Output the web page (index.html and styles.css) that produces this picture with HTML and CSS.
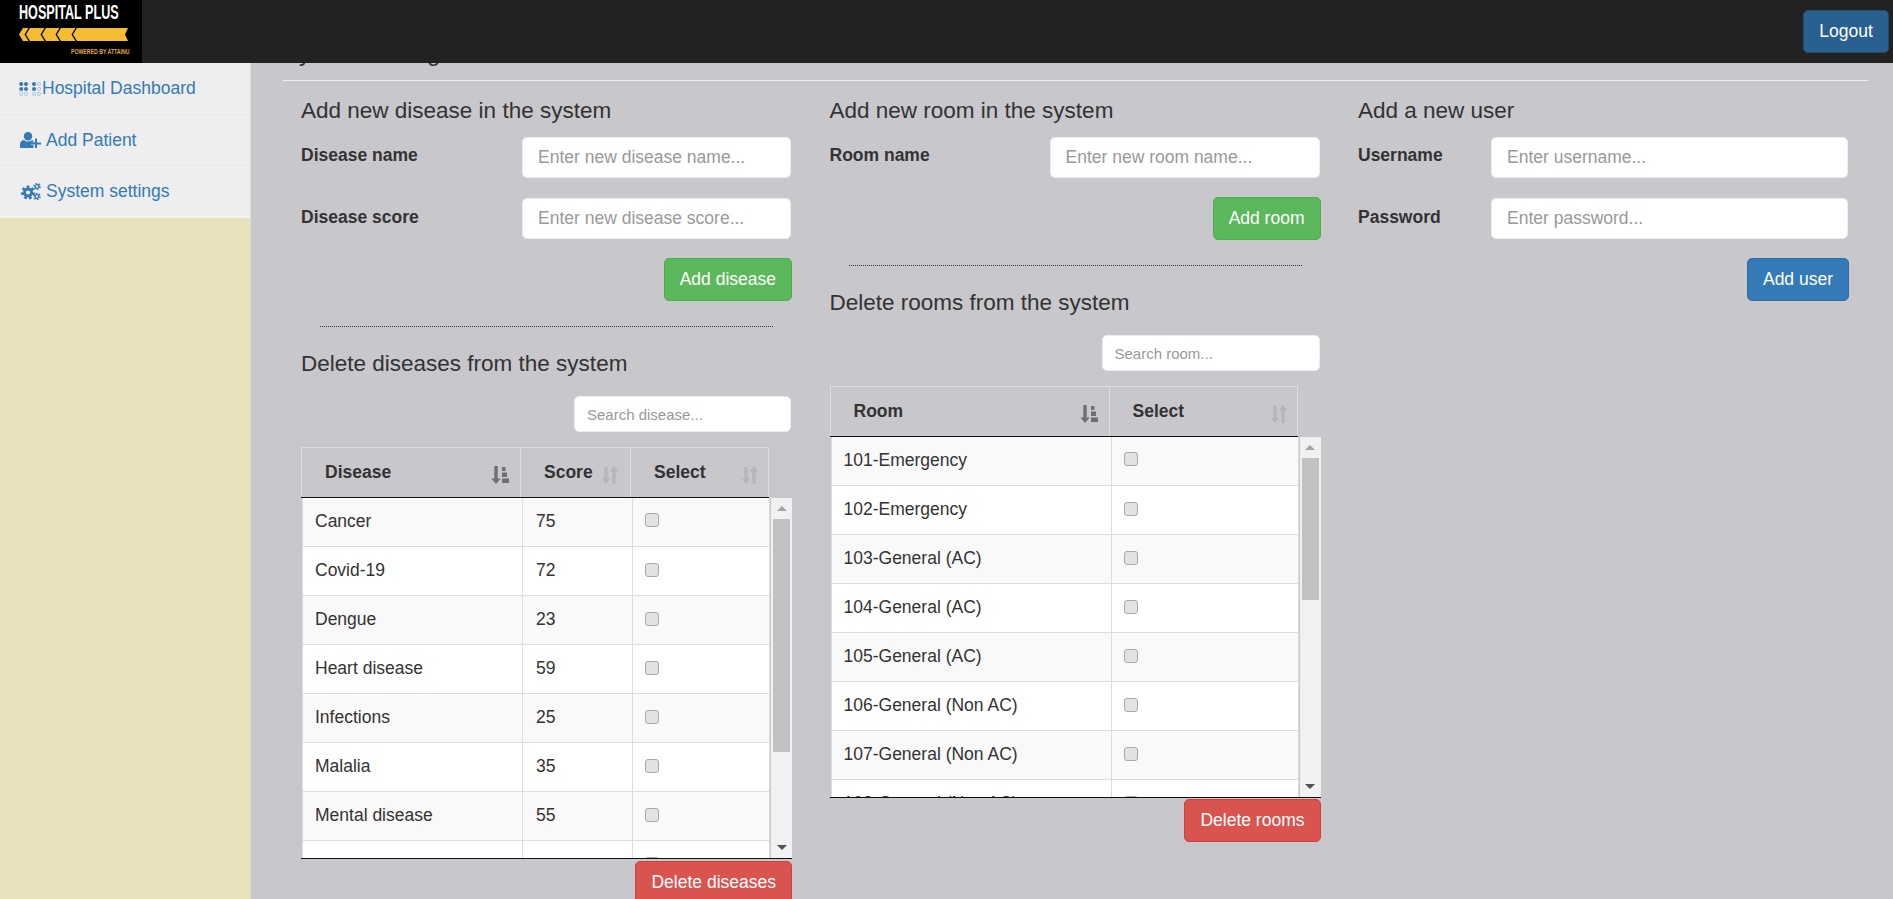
FILE: index.html
```html
<!DOCTYPE html>
<html lang="en">

<head>
    <meta charset="UTF-8">
    <meta name="viewport" content="width=device-width, initial-scale=1.0">
    <title>System settings - Hospital Plus</title>
    <link rel="stylesheet" href="styles.css">
</head>

<body>
    <svg class="defs" width="0" height="0">
        <symbol id="sort-amount" viewBox="0 0 18 18">
            <path d="M3.300 0h3.400v12.500h3L5 18 .3 12.500h3z" />
            <path d="M11 1h3.500v4H11zM11 6.500h5v4.500h-5zM11 12.500h7V17h-7z" />
        </symbol>
        <symbol id="sort-both" viewBox="0 0 18 18">
            <path d="M3.300 1h3.400v11.500h3L5 18 .3 12.500h3z" />
            <path d="M11.300 18h3.400V5.500h3L13 0 8.300 5.500h3z" />
        </symbol>
    </svg>

    <nav class="navbar">
        <a class="brand" href="#">
            <span class="brand-name">HOSPITAL PLUS</span>
            <svg class="brand-bar" viewBox="0 0 110 13" width="110" height="13">
                <path d="M4 0H9.500L5.500 6.500 9.500 13H4L0 6.500z" />
                <path d="M11 0H25.500L21.500 6.500 25.500 13H11L7 6.500z" />
                <path d="M27 0H40.500L36.500 6.500 40.500 13H27L23 6.500z" />
                <path d="M42 0H56.500L52.500 6.500 56.500 13H42L38 6.500z" />
                <path d="M58 0H109L106 6.500 109 13H58L54 6.500z" />
            </svg>
            <span class="brand-sub">POWERED BY ATTAINU</span>
        </a>
        <button class="btn btn-logout" type="button">Logout</button>
    </nav>

    <div class="layout">
        <aside class="sidebar">
            <a class="side-link" href="#">
                <svg class="icon-dash" viewBox="0 0 23 14" width="23" height="14">
                    <g class="dots-on">
                        <circle cx="2.200" cy="2" r="2" /><circle cx="7" cy="2" r="2" />
                        <circle cx="2.200" cy="7" r="2" /><circle cx="7" cy="7" r="2" />
                        <circle cx="15" cy="2" r="2" /><circle cx="15" cy="7" r="2" />
                    </g>
                    <g class="dots-off">
                        <circle cx="2.200" cy="12" r="1.600" /><circle cx="7" cy="12" r="1.600" />
                        <circle cx="20" cy="2" r="1.600" /><circle cx="20" cy="7" r="1.600" />
                        <circle cx="15" cy="12" r="1.600" /><circle cx="20" cy="12" r="1.600" />
                    </g>
                </svg>Hospital Dashboard
            </a>
            <a class="side-link" href="#">
                <svg class="icon-side" viewBox="0 0 21 16" width="21" height="16">
                    <circle cx="8" cy="4.200" r="4.200" />
                    <path d="M0 16v-3.500C0 9.500 2 8 4 8c1 1 2.500 1.500 4 1.500S11 9 12 8.300c.6.2 1.100.4 1.500.7v1.500H11V13h2.500v3z" />
                    <path d="M15 6.500h2v4h4v2h-4v3.500h-2v-3.500h-4v-2h4z" />
                </svg>
                <span>Add Patient</span>
            </a>
            <a class="side-link" href="#">
                <svg class="icon-side icon-cogs" viewBox="0 0 20 17" width="20" height="17">
                    <circle class="gear-teeth" cx="7" cy="9.500" r="5.500" />
                    <circle class="gear-ring" cx="7" cy="9.500" r="3.600" />
                    <circle class="gear-small-teeth" cx="16" cy="3.500" r="2.800" />
                    <circle class="gear-small-ring" cx="16" cy="3.500" r="1.800" />
                    <circle class="gear-small-teeth" cx="16" cy="13.500" r="2.800" />
                    <circle class="gear-small-ring" cx="16" cy="13.500" r="1.800" />
                </svg>
                <span>System settings</span>
            </a>
        </aside>

        <main class="content">
            <h2 class="page-title">System settings</h2>
            <hr class="page-rule">

            <div class="columns">
                <!-- diseases -->
                <section class="col">
                    <h4>Add new disease in the system</h4>
                    <form class="form-grid form-disease">
                        <label for="diseaseName">Disease name</label>
                        <input type="text" id="diseaseName" placeholder="Enter new disease name...">
                        <label for="diseaseScore">Disease score</label>
                        <input type="text" id="diseaseScore" placeholder="Enter new disease score...">
                    </form>
                    <div class="actions">
                        <button class="btn btn-success" type="button">Add disease</button>
                    </div>
                    <hr class="dotted">
                    <h4>Delete diseases from the system</h4>
                    <div class="search-row">
                        <input class="search search-disease" type="text" placeholder="Search disease...">
                    </div>
                    <div class="dt">
                        <table class="dt-head cols-disease">
                            <colgroup><col class="c1"><col class="c2"><col class="c3"></colgroup>
                            <tr>
                                <th><div class="th-inner">Disease<svg class="sort active"><use href="#sort-amount" /></svg></div></th>
                                <th class="th-tight"><div class="th-inner">Score<svg class="sort"><use href="#sort-both" /></svg></div></th>
                                <th class="th-tight"><div class="th-inner">Select<svg class="sort"><use href="#sort-both" /></svg></div></th>
                            </tr>
                        </table>
                        <div class="dt-body">
                            <div class="dt-rows">
                                <table class="cols-disease">
                                    <colgroup><col class="c1"><col class="c2"><col class="c3"></colgroup>
                                    <tr><td>Cancer</td><td>75</td><td><input type="checkbox"></td></tr>
                                    <tr><td>Covid-19</td><td>72</td><td><input type="checkbox"></td></tr>
                                    <tr><td>Dengue</td><td>23</td><td><input type="checkbox"></td></tr>
                                    <tr><td>Heart disease</td><td>59</td><td><input type="checkbox"></td></tr>
                                    <tr><td>Infections</td><td>25</td><td><input type="checkbox"></td></tr>
                                    <tr><td>Malalia</td><td>35</td><td><input type="checkbox"></td></tr>
                                    <tr><td>Mental disease</td><td>55</td><td><input type="checkbox"></td></tr>
                                    <tr><td></td><td></td><td><input type="checkbox"></td></tr>
                                </table>
                            </div>
                            <div class="scrollbar">
                                <span class="arrow arrow-up"></span>
                                <span class="thumb thumb-disease"></span>
                                <span class="arrow arrow-down"></span>
                            </div>
                        </div>
                    </div>
                    <div class="actions actions-delete">
                        <button class="btn btn-danger" type="button">Delete diseases</button>
                    </div>
                </section>

                <!-- rooms -->
                <section class="col">
                    <h4>Add new room in the system</h4>
                    <form class="form-grid form-room">
                        <label for="roomName">Room name</label>
                        <input type="text" id="roomName" placeholder="Enter new room name...">
                    </form>
                    <div class="actions">
                        <button class="btn btn-success" type="button">Add room</button>
                    </div>
                    <hr class="dotted">
                    <h4>Delete rooms from the system</h4>
                    <div class="search-row">
                        <input class="search search-room" type="text" placeholder="Search room...">
                    </div>
                    <div class="dt">
                        <table class="dt-head cols-room">
                            <colgroup><col class="c1"><col class="c2"></colgroup>
                            <tr>
                                <th><div class="th-inner">Room<svg class="sort active"><use href="#sort-amount" /></svg></div></th>
                                <th class="th-tight"><div class="th-inner">Select<svg class="sort"><use href="#sort-both" /></svg></div></th>
                            </tr>
                        </table>
                        <div class="dt-body">
                            <div class="dt-rows">
                                <table class="cols-room">
                                    <colgroup><col class="c1"><col class="c2"></colgroup>
                                    <tr><td>101-Emergency</td><td><input type="checkbox"></td></tr>
                                    <tr><td>102-Emergency</td><td><input type="checkbox"></td></tr>
                                    <tr><td>103-General (AC)</td><td><input type="checkbox"></td></tr>
                                    <tr><td>104-General (AC)</td><td><input type="checkbox"></td></tr>
                                    <tr><td>105-General (AC)</td><td><input type="checkbox"></td></tr>
                                    <tr><td>106-General (Non AC)</td><td><input type="checkbox"></td></tr>
                                    <tr><td>107-General (Non AC)</td><td><input type="checkbox"></td></tr>
                                    <tr><td>108-General (Non AC)</td><td><input type="checkbox"></td></tr>
                                </table>
                            </div>
                            <div class="scrollbar">
                                <span class="arrow arrow-up"></span>
                                <span class="thumb thumb-room"></span>
                                <span class="arrow arrow-down"></span>
                            </div>
                        </div>
                    </div>
                    <div class="actions actions-delete-room">
                        <button class="btn btn-danger" type="button">Delete rooms</button>
                    </div>
                </section>

                <!-- users -->
                <section class="col">
                    <h4>Add a new user</h4>
                    <form class="form-grid form-user">
                        <label for="username">Username</label>
                        <input type="text" id="username" placeholder="Enter username...">
                        <label for="password">Password</label>
                        <input type="password" id="password" placeholder="Enter password...">
                    </form>
                    <div class="actions">
                        <button class="btn btn-primary" type="button">Add user</button>
                    </div>
                </section>
            </div>
        </main>
    </div>
</body>

</html>
```

FILE: styles.css
```css
* {
    box-sizing: border-box;
}

html,
body {
    height: 100%;
    margin: 0;
    overflow: hidden;
}

body {
    display: flex;
    flex-direction: column;
    font-family: "Liberation Sans", Arial, sans-serif;
    font-size: 17.5px;
    color: #333;
    background-color: #c8c7cc;
}

.defs {
    display: block;
    height: 0;
}

/* top bar */
.navbar {
    display: flex;
    justify-content: space-between;
    align-items: center;
    flex: 0 0 63px;
    padding-right: 4px;
    background-color: #222;
    position: relative;
    z-index: 2;
}

.brand {
    display: flex;
    flex-direction: column;
    width: 142px;
    height: 63px;
    padding: 4px 0 0 19px;
    background-color: #000;
    text-decoration: none;
}

.brand-name {
    font-size: 21px;
    line-height: 16px;
    font-weight: bold;
    color: #fff;
    white-space: nowrap;
    transform: scaleX(0.6);
    transform-origin: left center;
}

.brand-bar {
    margin-top: 8px;
    fill: #f4bc33;
}

.brand-sub {
    margin: 7px 0 0 52px;
    font-size: 7px;
    line-height: 8px;
    font-weight: bold;
    color: #e0a92c;
    white-space: nowrap;
    transform: scaleX(0.74);
    transform-origin: left center;
}

.btn {
    height: 43px;
    padding: 0 15px;
    border: 1px solid transparent;
    border-radius: 5px;
    font-family: inherit;
    font-size: 17.5px;
    color: #fff;
    cursor: pointer;
}

.btn-logout {
    width: 86px;
    padding: 0;
    background-color: #286090;
    border-color: #204d74;
}

.btn-success {
    background-color: #5cb85c;
    border-color: #4cae4c;
}

.btn-primary {
    background-color: #337ab7;
    border-color: #2e6da4;
}

.btn-danger {
    background-color: #d9534f;
    border-color: #d43f3a;
}

/* page */
.layout {
    display: flex;
    flex: 1;
    min-height: 0;
}

.sidebar {
    flex: 0 0 251px;
    background-color: #e8e2bc;
    border-right: 1px solid #dcdce0;
}

.side-link {
    display: flex;
    align-items: center;
    height: 52px;
    padding-left: 19px;
    background-color: #eee;
    border-bottom: 1px solid #e7e7e7;
    color: #337ab7;
    text-decoration: none;
    white-space: nowrap;
}

.side-link:nth-child(2) {
    height: 51px;
}

.side-link:last-child {
    border-bottom: 2px solid #f5f5f0;
}

.icon-dash {
    flex: none;
}

.icon-side {
    flex: none;
    margin: 0 5px 0 1px;
    fill: #337ab7;
}

.icon-cogs {
    margin-left: 2px;
}

.dots-on {
    fill: #337ab7;
}

.dots-off {
    fill: none;
    stroke: #9dbedb;
    stroke-width: 0.8;
}

.gear-teeth {
    fill: none;
    stroke: #337ab7;
    stroke-width: 3;
    stroke-dasharray: 2.6 2.2;
}

.gear-ring {
    fill: none;
    stroke: #337ab7;
    stroke-width: 3;
}

.gear-small-teeth {
    fill: none;
    stroke: #337ab7;
    stroke-width: 2;
    stroke-dasharray: 1.5 1.4;
}

.gear-small-ring {
    fill: none;
    stroke: #337ab7;
    stroke-width: 1.3;
}

.content {
    flex: 1;
    min-width: 0;
    padding: 0 25px 0 32px;
}

.page-title {
    margin: -22px 0 0;
    font-size: 24px;
    line-height: 24px;
    font-weight: normal;
}

.page-rule {
    margin: 15px 0 0;
    border: 0;
    border-top: 1px solid #eee;
}

.columns {
    display: grid;
    grid-template-columns: repeat(3, 491px);
    column-gap: 37.5px;
    padding-left: 18px;
}

h4 {
    margin: 17px 0 0;
    font-size: 22.5px;
    line-height: 25px;
    font-weight: normal;
}

.dotted + h4 {
    margin-top: 24px;
}

.form-grid {
    display: grid;
    row-gap: 20px;
    margin-top: 14px;
    padding-right: 1px;
}

.form-disease {
    grid-template-columns: 221px 1fr;
}

.form-room {
    grid-template-columns: 220px 1fr;
}

.form-user {
    grid-template-columns: 133px 1fr;
}

label {
    padding-top: 8px;
    font-weight: bold;
}

label:nth-of-type(2) {
    padding-top: 9px;
}

input[type="text"],
input[type="password"] {
    height: 41px;
    padding: 0 15px;
    border: 1px solid #ececec;
    border-radius: 5px;
    font-family: inherit;
    font-size: 17.5px;
    background-color: #fff;
}

::placeholder {
    color: #999;
    opacity: 1;
}

.actions {
    display: flex;
    justify-content: flex-end;
    margin-top: 19px;
}

.actions-delete {
    margin-top: 2px;
}

.actions-delete-room {
    margin-top: 1px;
}

.dotted {
    width: 453px;
    margin: 25px auto 0;
    border: 0;
    border-top: 1px dotted #333;
}

.search-row {
    display: flex;
    justify-content: flex-end;
    margin-top: 20px;
    padding-right: 1px;
}

input.search {
    height: 36px;
    padding: 0 12px;
    font-size: 15px;
}

.search-disease {
    width: 217px;
}

.search-room {
    width: 218px;
}

/* tables */
.dt {
    margin-top: 15px;
    border-bottom: 1px solid #111;
}

table {
    width: 468px;
    table-layout: fixed;
    border-collapse: collapse;
}

.cols-disease .c1 {
    width: 220px;
}

.cols-disease .c2 {
    width: 110px;
}

.cols-room .c1 {
    width: 280px;
}

.dt-head.cols-disease .c1 {
    width: 219px;
}

.dt-head.cols-room .c1 {
    width: 279px;
}

.dt-head th {
    height: 50px;
    padding: 0 11px 0 23px;
    border: 1px solid #ddd;
    border-bottom: 1px solid #111;
    font-size: 17.5px;
    font-weight: bold;
    text-align: left;
}

.dt-head th.th-tight {
    padding-left: 23px;
}

.dt-head th:last-child {
    padding-right: 9px;
}

.th-inner {
    display: flex;
    justify-content: space-between;
    align-items: center;
}

.sort {
    width: 18px;
    height: 18px;
    margin-top: 4px;
    fill: #b7b7ba;
}

.sort.active {
    fill: #6f6f70;
}

.dt-body {
    display: flex;
    height: 360px;
}

.dt-rows {
    flex: 0 0 470px;
    overflow: hidden;
    padding-left: 1px;
}

.dt-rows table {
    margin-top: -1px;
}

.dt-rows tr:nth-child(odd) {
    background-color: #f9f9f9;
}

.dt-rows tr:nth-child(even) {
    background-color: #fff;
}

.dt-rows td {
    height: 49px;
    padding: 0 13px 1px;
    border: 1px solid #ddd;
    border-top: 0;
    line-height: 24px;
}

.dt-rows td:first-child {
    padding-left: 12px;
}

.dt-rows input[type="checkbox"] {
    appearance: none;
    display: block;
    width: 14px;
    height: 14px;
    margin: 0 0 1px -1px;
    border: 1px solid #a9a9a9;
    border-radius: 3px;
    background-color: #e2e2e2;
}

.scrollbar {
    display: flex;
    flex: 1;
    flex-direction: column;
    align-items: center;
    background-color: #f1f1f1;
}

.arrow {
    display: flex;
    flex: 0 0 21px;
    align-items: center;
    justify-content: center;
}

.arrow::before {
    content: "";
    border-left: 5px solid transparent;
    border-right: 5px solid transparent;
}

.arrow-up::before {
    border-bottom: 5px solid #a3a3a3;
}

.arrow-down {
    margin-top: auto;
}

.arrow-down::before {
    border-top: 5px solid #505050;
}

.thumb {
    width: 17px;
    background-color: #c1c1c1;
}

.thumb-disease {
    height: 233px;
}

.thumb-room {
    height: 142px;
}
```
